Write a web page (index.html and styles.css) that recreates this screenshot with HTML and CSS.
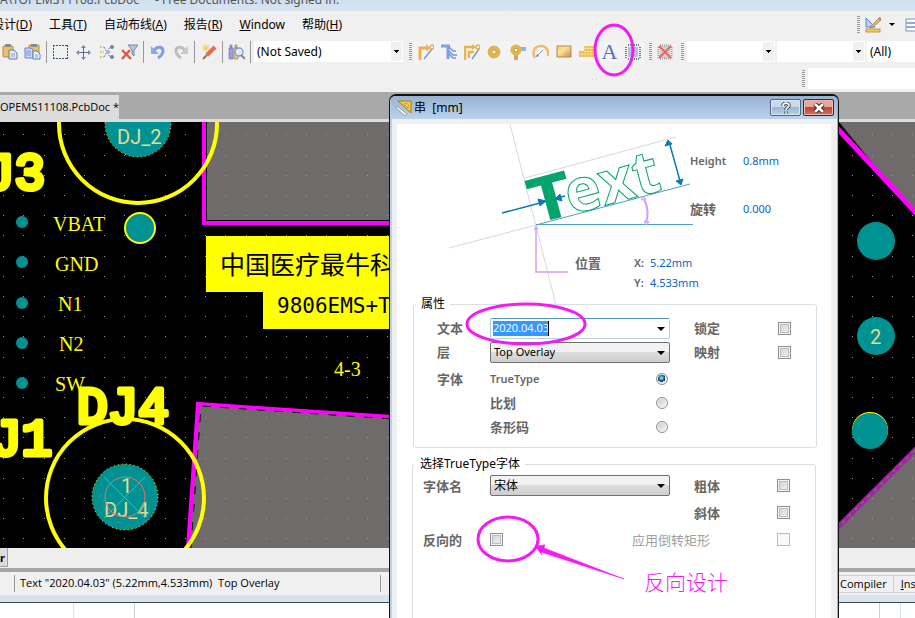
FILE: index.html
```html
<!DOCTYPE html>
<html lang="zh-CN">
<head>
    <meta charset="utf-8">
    <title>TOPEMS11108.PcbDoc</title>
    <link rel="stylesheet" href="styles.css">
</head>
<body>
    <header class="title-strip">
        <span>A\TOPEMS11108.PcbDoc *&nbsp; - Free Documents. Not signed in.</span>
    </header>

    <nav class="menu-bar">
        <a href="#">设计(<u>D</u>)</a>
        <a href="#">工具(<u>T</u>)</a>
        <a href="#">自动布线(<u>A</u>)</a>
        <a href="#">报告(<u>R</u>)</a>
        <a href="#"><u>W</u>indow</a>
        <a href="#">帮助(<u>H</u>)</a>
        <div class="menu-tools">
            <span class="grip"></span>
            <button class="menu-tool" aria-label="Utilities">
                <svg width="16" height="16" viewBox="0 0 16 16"><path d="M1 1v9h9z" fill="#b9cdf5" stroke="#5f82d8"/><path d="M6 9l8-8 2 2-8 7-3 1z" fill="#e3b978" stroke="#8a6a4a" stroke-width=".7"/><path d="M13 1l2 2 1-2-1-1z" fill="#e07070"/><rect x="1" y="12" width="14" height="3" fill="#f2cf62" stroke="#b08a2a" stroke-width=".8"/></svg>
            </button>
            <span class="arrow"></span>
            <button class="menu-tool" aria-label="Alignment">
                <svg width="16" height="16" viewBox="0 0 16 16"><rect x="1" y="2" width="15" height="12" fill="#fff" stroke="#7c93c8"/><path d="M1 6h15M1 10h15" stroke="#8fa9de" stroke-width="2"/></svg>
            </button>
        </div>
    </nav>

    <div class="toolbar">
        <button class="tool" aria-label="Paste"><svg width="16" height="16" viewBox="0 0 16 16"><rect x="1" y="2" width="10" height="11" rx="1" fill="#ecc064" stroke="#b8893a"/><rect x="3" y="0" width="6" height="3" rx="1" fill="#8e8a84"/><path d="M7 6h5l3 3v6H7z" fill="#dfe7f5" stroke="#6d7c9c"/><path d="M9 10h4M9 12h4" stroke="#8ea3c8"/></svg></button>
        <button class="tool" aria-label="Paste special"><svg width="17" height="16" viewBox="0 0 17 16"><rect x="5" y="1" width="10" height="10" rx="1" fill="#ecc064" stroke="#b8893a"/><rect x="7" y="0" width="6" height="3" fill="#8e8a84"/><path d="M1 4h6l2 2v8H1z" fill="#c9d8f4" stroke="#6485c8"/><path d="M9 7h4l3 3v5H9z" fill="#eef3fc" stroke="#5b7cc4"/><path d="M11 11h3M11 13h3M2 7h5M2 9h5M2 11h5" stroke="#7c9bd8"/></svg></button>
        <span class="sep"></span>
        <button class="tool" aria-label="Select area"><svg width="16" height="16" viewBox="0 0 16 16"><path d="M0 1.500h15M0 14.500h15M.5 1v14M14.500 1v14" fill="none" stroke="#3f5675" stroke-dasharray="2 1"/></svg></button>
        <button class="tool" aria-label="Move"><svg width="16" height="16" viewBox="0 0 16 16"><path d="M7.500 2v13M1 8.500h13" fill="none" stroke="#5a7090"/><path d="M5 4l2.500-3L10 4zM5 13l2.500 3 2.500-3zM3 6L0 8.500 3 11zM12 6l3 2.500-3 2.500z" fill="#7488a4"/></svg></button>
        <button class="tool" aria-label="Deselect"><svg width="16" height="16" viewBox="0 0 16 16"><path d="M5 3l6 10M5 13l6-10" fill="none" stroke="#6f7f9a" stroke-dasharray="2 1"/><path d="M1 3h4M1 8h4M1 13h4" stroke="#e4cb62" stroke-width="2" stroke-dasharray="2 1"/><circle cx="13" cy="3" r="2" fill="#6b83a8"/><circle cx="10" cy="8" r="1.500" fill="#a8b6ca"/><circle cx="13" cy="13" r="2" fill="#6b83a8"/></svg></button>
        <button class="tool" aria-label="Clear filter"><svg width="17" height="16" viewBox="0 0 17 16"><path d="M7 1h10l-4 5v6l-2-2V6z" fill="#b8c8da" stroke="#7088a4"/><path d="M1 6l9 9M9 6l-8 9" stroke="#ea5240" stroke-width="2.4"/></svg></button>
        <span class="sep"></span>
        <button class="tool" aria-label="Undo"><svg width="16" height="16" viewBox="0 0 16 16"><path d="M4 7c2-5 9-5 9 0 0 3-2 5-5 7" fill="none" stroke="#7d9fe6" stroke-width="3"/><path d="M1 2v8h8z" fill="#88a9ec"/></svg></button>
        <button class="tool" aria-label="Redo"><svg width="16" height="16" viewBox="0 0 16 16"><path d="M12 7C10 2 3 2 3 7c0 3 2 5 5 7" fill="none" stroke="#bdbdbd" stroke-width="3"/><path d="M15 2v8H7z" fill="#c8c8c8"/></svg></button>
        <span class="sep"></span>
        <button class="tool" aria-label="Cross probe"><svg width="16" height="16" viewBox="0 0 16 16"><path d="M5 0v8M1 4h8M2 1l6 6M8 1L2 7" stroke="#f1cf4b"/><path d="M14 3l-8 8" stroke="#e96d48" stroke-width="4"/><path d="M6 11l-4 4" stroke="#8a7160" stroke-width="2"/></svg></button>
        <span class="sep"></span>
        <button class="tool" aria-label="Browse"><svg width="17" height="16" viewBox="0 0 17 16"><path d="M1 4h4v11H1zM2 1h2v3H2z" fill="#a39cdf" stroke="#7d76c4" stroke-width=".7"/><path d="M6 4h4v11H6zM7 1h2v3H7z" fill="#ddcf9c" stroke="#8b8060" stroke-width=".7"/><circle cx="11" cy="8" r="4" fill="#dcecfb" stroke="#8b9db5" stroke-width="1.4"/><path d="M13 11l4 4" stroke="#888" stroke-width="2"/></svg></button>
        <span class="sep"></span>
        <span class="combo combo-saved"><select aria-label="View"><option>(Not Saved)</option></select></span>
        <span class="grip"></span>
        <div class="tool-group">
            <button class="tool" aria-label="Route"><svg width="16" height="16" viewBox="0 0 16 16"><path d="M2 16V4h7" fill="none" stroke="#efb050" stroke-width="3"/><path d="M8 0l4 4-4 4z" fill="#efb050"/><path d="M6 15L14 5" stroke="#6c98e0" stroke-width="1.4"/><circle cx="14" cy="3" r="2" fill="none" stroke="#e0b050" stroke-width="1.4"/></svg></button>
            <button class="tool" aria-label="Differential pair"><svg width="16" height="16" viewBox="0 0 16 16"><path d="M0 2h9M7 3v12" fill="none" stroke="#7ba3e2" stroke-width="3"/><path d="M8 3l4 4h3M8 7l4 4h4M8 10l4 4h3" fill="none" stroke="#6c98de" stroke-width="1.500"/></svg></button>
            <button class="tool" aria-label="Multi route"><svg width="16" height="16" viewBox="0 0 16 16"><path d="M1 16V3h8M5 14V8h5" fill="none" stroke="#efb050" stroke-width="2.4"/><path d="M8 0l4 3-4 3z" fill="#efb050"/><path d="M8 15l7-10" stroke="#6c98e0" stroke-width="1.4"/><circle cx="14" cy="3" r="2" fill="none" stroke="#e0b050" stroke-width="1.4"/></svg></button>
            <button class="tool" aria-label="Pad"><svg width="16" height="16" viewBox="0 0 16 16"><circle cx="7" cy="8" r="4" fill="#f8eed8" stroke="#e3b54a" stroke-width="4"/><circle cx="7" cy="8" r="6" fill="none" stroke="#cf9c3c" stroke-width=".6"/><circle cx="7" cy="8" r="2" fill="#fff" stroke="#a88a50" stroke-width=".8"/></svg></button>
            <button class="tool" aria-label="Via"><svg width="16" height="16" viewBox="0 0 16 16"><path d="M8 3h8v4H8z" fill="#7cc0dc"/><path d="M4 9h4v7H4z" fill="#d9a468"/><circle cx="6" cy="6" r="3.600" fill="#fff" stroke="#e6b54a" stroke-width="4"/><circle cx="6" cy="6" r="1.800" fill="#fff" stroke="#a88a50" stroke-width=".8"/></svg></button>
            <button class="tool" aria-label="Arc"><svg width="17" height="16" viewBox="0 0 17 16"><path d="M3 14C-1 6 4 2 9 2s8 4 7 10" fill="none" stroke="#efbb6c" stroke-width="2.6"/><path d="M5 12l6-6" stroke="#4c78c8" stroke-dasharray="2 1"/><path d="M4 13l1-3 2 2z" fill="#4c78c8"/></svg></button>
            <button class="tool" aria-label="Fill"><svg width="16" height="16" viewBox="0 0 16 16"><defs><linearGradient id="fill" x2="1" y2="1"><stop stop-color="#f2cd6c"/><stop offset=".4" stop-color="#fae3a0"/><stop offset="1" stop-color="#c78a44"/></linearGradient></defs><rect x="1" y="2" width="14" height="11" fill="url(#fill)" stroke="#b98a4c"/></svg></button>
            <button class="tool" aria-label="Polygon"><svg width="16" height="16" viewBox="0 0 16 16"><path d="M5 2h11v11H0V7h5z" fill="#edb84a"/><path d="M0 10h16M5 4.500h11M5 7.500h11M3 7v6M6 2v11M9 2v11M12 2v11M15 2v11" stroke="#fae29c" stroke-width=".8"/></svg></button>
            <button class="tool tool-string" aria-label="String">A</button>
            <button class="tool" aria-label="Component"><svg width="16" height="16" viewBox="0 0 16 16"><rect x="3" y="3" width="10" height="10" fill="#b0c1e0"/><path d="M3 1h11M3 15h11M1 3v11M15 3v11" stroke="#6a7896" stroke-width="2" stroke-dasharray="1 1"/></svg></button>
        </div>
        <span class="grip grip-near"></span>
        <button class="tool" aria-label="Clear"><svg width="16" height="16" viewBox="0 0 16 16"><rect x="3" y="2" width="10" height="12" fill="#cfcfcf"/><path d="M3 1.500h11M3 14.500h11M1.500 3v11M14.500 3v11" stroke="#999" stroke-width="2" stroke-dasharray="1 1"/><path d="M2 2l12 12M14 2L2 14" stroke="#f06060" stroke-width="1.8"/></svg></button>
        <span class="grip grip-near"></span>
        <span class="combo combo-filter"><select aria-label="Net filter"><option></option></select></span>
        <span class="combo combo-filter"><select aria-label="Component filter"><option></option></select></span>
        <span class="combo combo-all"><select aria-label="Scope"><option>(All)</option></select></span>
    </div>

    <div class="search-row">
        <span class="grip"></span>
        <input type="text" aria-label="Search">
    </div>

    <div class="doc-tabs">
        <a href="#" class="doc-tab">OPEMS11108.PcbDoc *</a>
    </div>

    <main class="board">
        <svg width="100%" height="100%" viewBox="0 122 915 426" preserveAspectRatio="xMinYMin slice">
            <defs>
                <pattern id="dots" width="101" height="101" patternUnits="userSpaceOnUse">
                    <g fill="none" stroke="#9a9a9a" shape-rendering="crispEdges">
                        <path d="M3 13.500h1m19 0h1m20 0h1m19 0h1m19 0h1"/>
                        <path d="M3 33.500h1m19 0h1m20 0h1m19 0h1m19 0h1"/>
                        <path d="M3 54.500h1m19 0h1m20 0h1m19 0h1m19 0h1"/>
                        <path d="M3 74.500h1m19 0h1m20 0h1m19 0h1m19 0h1"/>
                        <path d="M3 94.500h1m19 0h1m20 0h1m19 0h1m19 0h1"/>
                    </g>
                </pattern>
            </defs>

            <!-- board areas -->
            <g fill="#6f6b6a">
                <path d="M207 122h200v98H207z"/>
                <path d="M198 404l209 14v130H188z"/>
                <path d="M839 122h76v93z"/>
                <path d="M839 526l76-76v98h-76z"/>
            </g>
            <rect x="0" y="122" width="100%" height="426" fill="url(#dots)"/>
            <g fill="none" stroke="#f0f" stroke-width="4">
                <path d="M204 122v101h200"/>
                <path d="M188 548l10-144 209 14"/>
                <path d="M836 127l82 88" stroke-width="5"/>
            </g>
            <path d="M191 548l10-142 206 14" fill="none" stroke="#000" stroke-dasharray="8 10"/>
            <path d="M836 529l82-82" stroke="#b01ab0" stroke-width="5"/>
            <path d="M836 529l82-82" stroke="#1fa51f" stroke-width="2" stroke-dasharray="3 6"/>

            <!-- pads -->
            <g fill="#009292">
                <circle cx="138" cy="124" r="33" stroke="#ff0" stroke-dasharray="1 3"/>
                <circle cx="125" cy="497" r="33" stroke="#ff0" stroke-dasharray="1 3"/>
                <circle cx="140" cy="228" r="15" stroke="#ff0" stroke-width="2"/>
                <circle cx="22" cy="222" r="6"/>
                <circle cx="22" cy="262" r="6"/>
                <circle cx="22" cy="303" r="6"/>
                <circle cx="22" cy="343" r="6"/>
                <circle cx="22" cy="383" r="6"/>
                <circle cx="876" cy="241" r="19"/>
                <circle cx="876" cy="336" r="19"/>
            </g>
            <circle cx="870" cy="430" r="18" fill="#ff0"/>
            <circle cx="870" cy="431" r="18" fill="#009292"/>
            <g fill="none" stroke="#ff0" stroke-width="4">
                <circle cx="138" cy="124" r="79"/>
                <circle cx="125" cy="498" r="79"/>
            </g>

            <!-- silkscreen -->
            <path d="M206 236h201v93H263v-37h-57z" fill="#ff0"/>
            <text class="silk-cn" x="220" y="274">中国医疗最牛科</text>
            <text class="silk-mono" x="277" y="313">9806EMS+T</text>
            <g class="silk-serif">
                <text x="53" y="231">VBAT</text>
                <text x="55" y="271">GND</text>
                <text x="58" y="311">N1</text>
                <text x="59" y="351">N2</text>
                <text x="55" y="391">SW</text>
                <text x="334" y="376">4-3</text>
            </g>
            <g class="silk-bold">
                <text x="-16" y="189">J3</text>
                <text x="-9" y="455">J1</text>
                <text x="77" y="423">DJ4</text>
            </g>
            <g class="pad-name">
                <text x="117" y="144">DJ_2</text>
                <text x="121" y="493">1</text>
                <text x="104" y="517">DJ_4</text>
                <text x="870" y="344">2</text>
            </g>
            <g fill="none" stroke="#e8706c">
                <circle cx="125" cy="497" r="20"/>
                <path d="M104 477l41 41M145 477l-41 41"/>
            </g>
        </svg>
    </main>

    <div class="panel-bar"><a href="#">r</a></div>

    <footer class="status-bar">
        <div class="status-text">Text "2020.04.03" (5.22mm,4.533mm)&nbsp; Top Overlay</div>
        <div class="status-panels">
            <button>Compiler</button>
            <button><u>I</u>nstruments</button>
        </div>
    </footer>

    <div class="sheet">
        <div class="sheet-cell cell-first"></div>
        <div class="sheet-cell cell-second"></div>
        <div class="sheet-cell cell-wide"></div>
        <div class="sheet-cell cell-narrow"></div>
        <div class="sheet-end"></div>
    </div>

    <section class="dialog" role="dialog" aria-labelledby="dialog-title">
        <div class="dialog-title">
            <svg width="16" height="16" viewBox="0 0 16 16"><path d="M2 1h13v12z" fill="#f5cc3c" stroke="#a87c14"/><path d="M8 4h4v4z" fill="#fdf3cf" stroke="#a87c14" stroke-width=".7"/><path d="M1 6l10 8-2 2L0 8z" fill="#f4f4f4" stroke="#8c8c8c" stroke-width=".8"/></svg>
            <h1 id="dialog-title">串&nbsp; [mm]</h1>
            <button class="caption-button" aria-label="Help"><svg width="12" height="12" viewBox="0 0 12 12"><path d="M3 4c0-4 6-3.500 6-.5C9 5.500 6 5 6 8M6 9.500v2" fill="none" stroke="#3c4450" stroke-width="3.600"/><path d="M3 4c0-4 6-3.500 6-.5C9 5.500 6 5 6 8M6 9.500v2" fill="none" stroke="#fff" stroke-width="1.600"/></svg></button>
            <button class="caption-button caption-close" aria-label="Close"><svg width="12" height="10" viewBox="0 0 12 10"><path d="M2 1l8 8M10 1L2 9" stroke="#4b2b2b" stroke-width="4.600"/><path d="M3 2l6 6M9 2L3 8" stroke="#fff" stroke-width="2.600" stroke-linecap="square"/></svg></button>
        </div>

        <form class="dialog-body">
            <div class="diagram">
                <svg class="diagram-art" width="434" height="181" viewBox="0 0 434 181">
                    <g fill="none" stroke="#d9d9d9">
                        <path d="M113 0l46 181M52 124l87-23M128 54L279 13"/>
                    </g>
                    <path d="M139 101l154-41M139 100.500h157" stroke="#4d9fd0" fill="none"/>
                    <g transform="translate(139 101) rotate(-15)">
                        <text class="word-solid" x="0" y="-1">T</text>
                        <text class="word-outline" x="36" y="-1">ext</text>
                    </g>
                    <g stroke="#0a7ab8" fill="#0a7ab8">
                        <path d="M105 89l38-10M168 72l-8 2M273 21l10 36" stroke-width="1.500"/>
                        <path d="M149 77l-8-2 2 7zM158 75l5-5 2 7z"/>
                        <path d="M271 16l-3 6 7-2zM284 61l-5-4 7-2z"/>
                    </g>
                    <g stroke="#cf9dff" fill="none">
                        <path d="M139 104v44h32" stroke-width="1.500"/>
                        <path d="M247 75q6 12 2 24" stroke-width="2"/>
                        <path d="M139 102l-2 3h4zM246 73l-2 3 5-1zM249 101l-2-4 5 1z"/>
                    </g>
                </svg>
                <b class="height-name">Height</b><span class="height-value">0.8mm</span>
                <b class="turn-name">旋转</b><span class="turn-value">0.000</span>
                <b class="place-name">位置</b>
                <b class="x-name">X:</b><span class="x-value">5.22mm</span>
                <b class="y-name">Y:</b><span class="y-value">4.533mm</span>
            </div>

            <fieldset class="properties">
                <legend>属性</legend>
                <label for="string-text">文本</label>
                <div class="edit-combo"><input type="text" id="string-text" value="2020.04.03"></div>
                <label for="locked" class="flag-name">锁定</label>
                <input type="checkbox" id="locked">

                <label for="layer">层</label>
                <div class="drop"><select id="layer"><option>Top Overlay</option></select></div>
                <label for="mirror" class="flag-name">映射</label>
                <input type="checkbox" id="mirror">

                <span class="row-name">字体</span>
                <label class="radio-row radio-latin">TrueType<input type="radio" name="font" checked></label>
                <label class="radio-row">比划<input type="radio" name="font"></label>
                <label class="radio-row">条形码<input type="radio" name="font"></label>
            </fieldset>

            <fieldset class="truetype">
                <legend>选择TrueType字体</legend>
                <label for="font-name">字体名</label>
                <div class="drop"><select id="font-name"><option>宋体</option></select></div>
                <label for="bold" class="flag-name">粗体</label>
                <input type="checkbox" id="bold">

                <label for="italic" class="flag-name">斜体</label>
                <input type="checkbox" id="italic">

                <label for="inverted">反向的</label>
                <input type="checkbox" id="inverted">
                <label for="inverted-rect" class="rect-name">应用倒转矩形</label>
                <input type="checkbox" id="inverted-rect" disabled>
            </fieldset>
        </form>
    </section>

    <!-- hand-drawn notes over the window -->
    <svg class="notes" width="915" height="618" viewBox="0 0 915 618">
        <g fill="none" stroke="#f41af4" stroke-width="3">
            <ellipse cx="614" cy="50" rx="19" ry="25"/>
            <ellipse cx="526" cy="324" rx="59" ry="20"/>
            <ellipse cx="508" cy="539" rx="30" ry="22"/>
        </g>
        <path d="M535 546l10-1-1 3 80 31-83-27 1 3z" fill="#f41af4" stroke="#f41af4" stroke-width=".6"/>
        <text x="644" y="590">反向设计</text>
    </svg>
</body>
</html>
```
FILE: styles.css
```css
* {
    box-sizing: border-box;
}

body {
    margin: 0;
    height: 100vh;
    display: flex;
    flex-direction: column;
    position: relative;
    overflow: hidden;
    background: #f0f0f0;
    color: #000;
    font-family: "Noto Sans", "Noto Sans CJK SC", sans-serif;
    font-size: 12px;
    line-height: 16px;
}

a {
    color: inherit;
    text-decoration: none;
}

button {
    padding: 0;
    border: 0;
    background: none;
    font: inherit;
}

select, input {
    font: inherit;
    color: inherit;
}

/* main window */

.title-strip {
    height: 11px;
    flex: none;
    overflow: hidden;
    background: linear-gradient(#cfdfed, #d9e6f2);
    color: #555;
    line-height: 0;
    white-space: nowrap;
}

.menu-bar {
    height: 27px;
    flex: none;
    display: flex;
    align-items: center;
    gap: 17px;
    margin-left: -8px;
    white-space: nowrap;
}

.menu-tools {
    display: flex;
    align-items: center;
    margin-left: auto;
    margin-right: -6px;
}

.menu-tool {
    width: 16px;
    height: 16px;
}

.menu-tools .grip {
    margin: 0 5px 0 0;
}

.arrow {
    margin: 0 10px 0 8px;
    border: 3px solid transparent;
    border-top-color: #000;
    border-bottom: 0;
}

.grip {
    flex: none;
    width: 3px;
    height: 17px;
    margin: 0 2px 0 6px;
    background: repeating-linear-gradient(#999 0 1px, #f0f0f0 1px 2px);
}

.grip-near {
    margin: 0 1px 0 5px;
}

.toolbar {
    height: 27px;
    flex: none;
    display: flex;
    align-items: center;
    margin-left: -2px;
    overflow: hidden;
}

.tool {
    flex: none;
    width: 23px;
    height: 22px;
    display: flex;
    align-items: center;
    justify-content: center;
}

.tool-group {
    display: flex;
    background: #f3f3f3;
}

.tool-string {
    color: #5b74a8;
    font: 22px "Liberation Serif", serif;
}

.sep {
    flex: none;
    width: 1px;
    height: 22px;
    margin: 0 2px;
    background: #999;
}

.combo {
    position: relative;
    flex: none;
    height: 21px;
    background: #fff;
}

.combo select {
    appearance: none;
    width: 100%;
    height: 21px;
    padding: 0 3px;
    border: 0;
    background: none;
}

.combo::after {
    content: "";
    position: absolute;
    right: 1px;
    top: 1px;
    width: 11px;
    height: 19px;
    background: linear-gradient(#000, #000) 50% 8px / 5px 1px no-repeat,
        linear-gradient(#000, #000) 50% 9px / 3px 1px no-repeat,
        linear-gradient(#000, #000) 50% 10px / 1px 1px no-repeat,
        #f0f0f0;
}

.combo-saved {
    width: 149px;
    margin-left: 1px;
}

.combo-filter {
    width: 88px;
    margin-left: 2px;
}

.combo-all {
    width: 90px;
    margin-left: 2px;
}

.search-row {
    height: 27px;
    flex: none;
    display: flex;
    align-items: center;
    justify-content: flex-end;
}

.search-row input {
    width: 107px;
    height: 21px;
    border: 0;
    background: #fff;
}

.search-row .grip {
    margin-right: 3px;
}

.doc-tabs {
    height: 30px;
    flex: none;
    display: flex;
    align-items: flex-end;
    background: #a9a9a9;
    border-bottom: 3px solid #dcdcdc;
}

.doc-tab {
    width: 119px;
    height: 24px;
    background: #dcdcdc;
    font-family: "Open Sans", sans-serif;
    font-size: 11px;
    line-height: 24px;
    white-space: nowrap;
}

.board {
    flex: 1;
    min-height: 0;
    background: #000;
    overflow: hidden;
}

.board svg {
    display: block;
}

.silk-cn {
    font: 25px "Noto Sans CJK SC", sans-serif;
}

.silk-mono {
    font: 21px "DejaVu Sans Mono", monospace;
}

.silk-serif {
    fill: #ff0;
    font: 20px "Liberation Serif", serif;
}

.silk-bold {
    fill: #ff0;
    stroke: #ff0;
    stroke-width: 5px;
    stroke-linejoin: round;
    font: 51px "Liberation Mono", monospace;
}

.pad-name {
    fill: #e0dc96;
    font: 20px Roboto, sans-serif;
}

.panel-bar {
    height: 20px;
    flex: none;
    background: #efefef;
}

.panel-bar a {
    display: block;
    width: 8px;
    height: 19px;
    border: 1px solid #a0a0a0;
    border-width: 0 1px 1px 0;
    background: #dcdcdc;
    font-size: 11px;
    font-weight: bold;
    line-height: 19px;
}

.status-bar {
    height: 35px;
    flex: none;
    display: flex;
    justify-content: space-between;
    padding: 3px 0 4px;
    border-top: 4px solid #a5a5a5;
    border-bottom: 1px solid #444;
    background: linear-gradient(#f0f0f0 23px, #d6e4f1 23px);
    font-family: "Open Sans", sans-serif;
    font-size: 11px;
    white-space: nowrap;
}

.status-text {
    width: 367px;
    height: 17px;
    margin-left: 14px;
    padding-left: 5px;
    border: solid #999;
    border-width: 0 1px;
}

.status-panels {
    display: flex;
    width: 76px;
    height: 18px;
    overflow: hidden;
    color: #555;
}

.status-panels button {
    padding: 0 6px 0 7px;
    border: 1px solid #d0d0d0;
    border-left: 0;
}

.status-panels button:first-child {
    padding-left: 1px;
}

.sheet {
    height: 15px;
    flex: none;
    display: flex;
    background: #fff;
}

.sheet-cell {
    border-right: 1px solid #cfcfcf;
}

.cell-first {
    width: 74px;
    border-color: #d6e4f1;
}

.cell-second {
    width: 61px;
}

.cell-wide {
    flex: 1;
}

.cell-narrow {
    width: 21px;
    border-color: #d6e4f1;
}

.sheet-end {
    width: 14px;
}

/* string dialog */

.dialog {
    position: absolute;
    left: 389px;
    top: 94px;
    width: 450px;
    padding: 0 6px;
    border: solid #111;
    border-width: 2px 1px 0;
    border-radius: 7px 7px 0 0;
    background: #f0f0f0;
    box-shadow: inset 2px 0 #b9d1ea, inset -1px 0 #5cc8ee;
    overflow: hidden;
    font-size: 11px;
}

.dialog-title {
    display: flex;
    align-items: center;
    gap: 2px;
    height: 23px;
    margin: 0 -5px 5px;
    padding: 0 3px 0 5px;
    background: linear-gradient(#97b2d0, #bad2ec);
}

.dialog-title h1 {
    flex: 1;
    margin: 0;
    font-size: 12px;
    font-weight: normal;
    white-space: pre;
}

.caption-button {
    display: flex;
    align-items: center;
    justify-content: center;
    width: 31px;
    height: 17px;
    border: 1px solid #50657f;
    border-radius: 2px;
    background: linear-gradient(#c9daec 45%, #9db8d5 50%, #b9d0e8);
    box-shadow: inset 0 0 0 1px #d8e6f4;
}

.caption-close {
    border-color: #5a1c1c;
    background: linear-gradient(#e6a69c 45%, #bd4530 50%, #d0705a);
    box-shadow: inset 0 0 0 1px #eab8ae;
}

.dialog-body {
    margin: 0 1px;
    background: #fff;
    color: #666;
}

.diagram {
    position: relative;
    display: grid;
    grid-template-columns: 178px 59px 16px 40px 53px 1fr;
    grid-template-rows: 48px 48px 20px 20px 20px;
    align-items: center;
    padding: 13px 0 3px;
}

.diagram-art {
    position: absolute;
    left: 0;
    top: 0;
}

.diagram b {
    font-weight: 600;
}

.diagram span {
    color: #0a62c4;
}

.height-name { grid-area: 1 / 5; }
.height-value { grid-area: 1 / 6; }
.turn-name { grid-area: 2 / 5; }
.turn-value { grid-area: 2 / 6; }
.place-name { grid-area: 4 / 2; }
.x-name { grid-area: 4 / 3; }
.x-value { grid-area: 4 / 4 / 5 / 7; }
.y-name { grid-area: 5 / 3; }
.y-value { grid-area: 5 / 4 / 6 / 7; }

.turn-name, .place-name {
    font-size: 13px;
}

.word-solid {
    fill: #05a46c;
    font: bold 61px "DejaVu Sans", sans-serif;
}

.word-outline {
    fill: #fff;
    stroke: #05a46c;
    stroke-width: 1px;
    font: bold 60px "Open Sans", sans-serif;
}

fieldset {
    display: grid;
    align-items: center;
    min-width: 0;
    border: 1px solid #d5dfe5;
    border-radius: 3px;
}

legend {
    height: 16px;
    padding: 0 5px;
    color: #000;
    font-size: 12px;
    line-height: 16px;
}

fieldset label, .row-name {
    font-size: 13px;
    font-weight: 600;
}

.properties {
    grid-template-columns: 53px 180px 108px 1fr;
    grid-auto-rows: 24px;
    margin: 0 14px 0 16px;
    padding: 4px 0 11px 23px;
}

.properties legend {
    margin-left: -21px;
}

.flag-name {
    padding-left: 24px;
}

.radio-row {
    grid-column: 2;
    display: flex;
    align-items: center;
    justify-content: space-between;
    padding-right: 2px;
}

.radio-row, .row-name {
    padding-top: 6px;
}

.properties .radio-latin {
    font-size: 11px;
}

.edit-combo, .drop {
    position: relative;
    height: 21px;
    border: 1px solid #b5cfe7;
    border-top-color: #5794bf;
    border-radius: 2px;
    background: #fff;
}

.edit-combo {
    padding: 2px;
}

.edit-combo input {
    display: block;
    width: 56px;
    height: 15px;
    padding: 0;
    border: 0;
    border-right: 1px solid #000;
    background: #39f;
    color: #fff;
    font-family: "Open Sans", sans-serif;
    font-size: 11px;
    outline: 0;
}

.drop {
    border-color: #707070;
    background: linear-gradient(#f2f2f2 45%, #dcdcdc 50%, #cfcfcf);
}

.drop select {
    appearance: none;
    display: block;
    width: 100%;
    height: 19px;
    padding: 0 3px;
    border: 0;
    background: none;
    color: #000;
    font-size: 11px;
}

.truetype .drop select {
    font-size: 12px;
}

.edit-combo::after, .drop::after {
    content: "";
    position: absolute;
    right: 4px;
    top: 8px;
    border: 4px solid transparent;
    border-top-color: #000;
    border-bottom: 0;
    pointer-events: none;
}

input[type="checkbox"] {
    appearance: none;
    width: 13px;
    height: 13px;
    margin: 0;
    border: 1px solid #8e8f8f;
    background: linear-gradient(135deg, #cbcfd5, #f6f6f6);
    box-shadow: inset 0 0 0 1px #f4f4f4, inset 0 0 0 2px #b9bdc4;
}

input[type="checkbox"]:disabled {
    border-color: #bcbcbc;
    background: #f8f8f8;
    box-shadow: none;
}

input[type="radio"] {
    appearance: none;
    width: 12px;
    height: 12px;
    margin: 0;
    border: 1px solid #8e8f8f;
    border-radius: 50%;
    background: linear-gradient(135deg, #c4c8ce, #fafafa);
    box-shadow: inset 0 0 0 1px #f4f4f4;
}

input[type="radio"]:checked {
    background: radial-gradient(circle at 45% 40%, #5fd0f5 0 1px, #15507f 3px, #0c2e4c 4px, #e8e8e8 4px);
}

.truetype {
    grid-template-columns: 67px 142px 38px 107px 1fr;
    grid-auto-rows: 27px;
    margin: 8px 15px 0;
    padding: 0 0 80px 10px;
}

.truetype legend {
    margin-left: -8px;
}

.truetype .drop {
    grid-column: 2 / 4;
}

.truetype .flag-name {
    grid-column: 4;
}

.truetype .rect-name {
    grid-column: 3 / 5;
    color: #a0a0a0;
    font-weight: normal;
}

/* notes */

.notes {
    position: absolute;
    left: 0;
    top: 0;
    pointer-events: none;
}

.notes text {
    fill: #f41af4;
    font: 300 21px "Noto Sans CJK SC", sans-serif;
}
```
